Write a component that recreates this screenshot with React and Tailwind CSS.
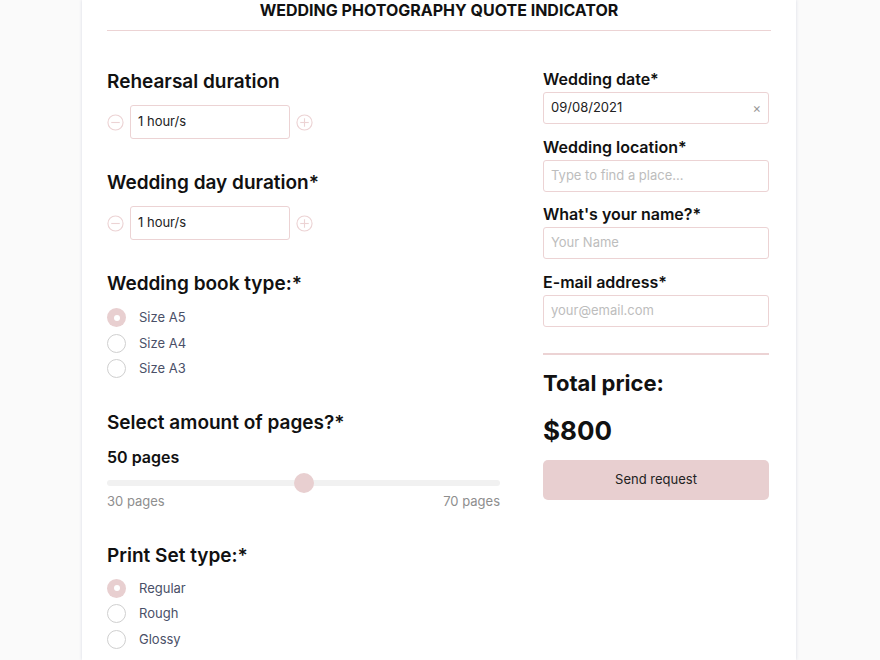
import React, { useState } from 'react';

function StepIcon({ plus }) {
  return (
    <svg width="17" height="17" viewBox="0 0 18 18" className="shrink-0">
      <circle cx="9" cy="9" r="8" fill="none" stroke="#ecd3d4" strokeWidth="1.2" />
      <line x1="4.5" y1="9" x2="13.5" y2="9" stroke="#ecd3d4" strokeWidth="1.2" />
      {plus && <line x1="9" y1="4.5" x2="9" y2="13.5" stroke="#ecd3d4" strokeWidth="1.2" />}
    </svg>
  );
}

function Stepper({ value }) {
  return (
    <div className="flex items-center gap-[6px]">
      <StepIcon />
      <div className="w-[160px] h-[34px] border border-[#ecd3d4] rounded-[3px] flex items-center px-[7px] text-[13px] text-[#222]">
        {value}
      </div>
      <StepIcon plus />
    </div>
  );
}

function Radio({ label, checked }) {
  return (
    <label className="flex items-center h-[25.5px] gap-[13px]">
      {checked ? (
        <span className="w-[19px] h-[19px] rounded-full bg-[#e8cfd0] flex items-center justify-center">
          <span className="w-[6px] h-[6px] rounded-full bg-white" />
        </span>
      ) : (
        <span className="w-[19px] h-[19px] rounded-full border border-[#cfcfcf] bg-white" />
      )}
      <span className="text-[13px] text-[#4a5068]">{label}</span>
    </label>
  );
}

function Field({ label, placeholder, value, clear }) {
  return (
    <div className="mb-[12.5px]">
      <div className="text-[16px] font-semibold text-[#111] leading-[20px] mb-[3px]">{label}</div>
      <div className="h-[32px] border border-[#ecd3d4] rounded-[3px] flex items-center justify-between px-[7px] text-[13px]">
        {value ? <span className="text-[#222]">{value}</span> : <span className="text-[#bdbdbd]">{placeholder}</span>}
        {clear && <span className="text-[#999] text-[13px] leading-none">×</span>}
      </div>
    </div>
  );
}

export default function App() {
  const [pages] = useState(50);
  const pct = ((pages - 30) / 40) * 100;

  return (
    <div className="min-h-[660px] bg-[#fafafa] flex" style={{ fontFamily: 'Inter, "Noto Sans", sans-serif' }}>
      <div className="ml-[82px] w-[714px] bg-white shadow-[0_0_3px_rgba(120,130,170,0.25)] px-[25px] h-[660px] overflow-hidden">
        <h1 className="text-center text-[16px] font-bold text-[#111] leading-[18px] pt-[1px] pb-[11px] border-b border-[#ecd3d4]">
          WEDDING PHOTOGRAPHY QUOTE INDICATOR
        </h1>

        <div className="flex gap-[43px] pt-[38px]">
          <div className="w-[393px] pt-[1px]">
            <h2 className="text-[19px] font-semibold text-[#111] leading-[24px] mb-[11px]">Rehearsal duration</h2>
            <Stepper value="1 hour/s" />

            <h2 className="text-[19px] font-semibold text-[#111] leading-[24px] mt-[32px] mb-[11px]">Wedding day duration*</h2>
            <Stepper value="1 hour/s" />

            <h2 className="text-[19px] font-semibold text-[#111] leading-[24px] mt-[32px] mb-[9px]">Wedding book type:*</h2>
            <div className="flex flex-col">
              <Radio label="Size A5" checked />
              <Radio label="Size A4" />
              <Radio label="Size A3" />
            </div>

            <h2 className="text-[19px] font-semibold text-[#111] leading-[24px] mt-[29px] mb-[12px]">Select amount of pages?*</h2>
            <div className="text-[16px] font-semibold text-[#111] leading-[20px]">{pages} pages</div>
            <div className="relative h-[20px] mt-[6px] flex items-center">
              <div className="w-full h-[6px] rounded-full bg-[#f1f1f1]" />
              <div
                className="absolute top-0 w-[20px] h-[20px] rounded-full bg-[#e8cfd0] -translate-x-1/2"
                style={{ left: `${pct}%` }}
              />
            </div>
            <div className="flex justify-between text-[13px] text-[#8e8e8e] leading-[16px]">
              <span>30 pages</span>
              <span>70 pages</span>
            </div>

            <h2 className="text-[19px] font-semibold text-[#111] leading-[24px] mt-[35px] mb-[8px]">Print Set type:*</h2>
            <div className="flex flex-col">
              <Radio label="Regular" checked />
              <Radio label="Rough" />
              <Radio label="Glossy" />
            </div>
          </div>

          <div className="w-[226px]">
            <Field label="Wedding date*" value="09/08/2021" clear />
            <Field label="Wedding location*" placeholder="Type to find a place..." />
            <Field label="What's your name?*" placeholder="Your Name" />
            <Field label="E-mail address*" placeholder="your@email.com" />
            <div className="border-t-2 border-[#ecd3d4] mt-[26px]" />
            <div className="text-[22px] font-bold text-[#111] leading-[28px] mt-[14px]">Total price:</div>
            <div className="text-[26px] font-bold text-[#111] leading-[32px] mt-[18px]">$800</div>
            <button className="w-full h-[40px] mt-[13px] rounded-[5px] bg-[#e8cfd0] text-[13px] text-[#222]">
              Send request
            </button>
          </div>
        </div>
      </div>
    </div>
  );
}
